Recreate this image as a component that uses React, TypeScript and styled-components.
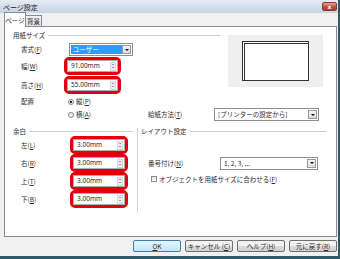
import React from 'react';
import styled, { createGlobalStyle, css } from 'styled-components';

const Global = createGlobalStyle`
  html, body { margin: 0; padding: 0; background: #f0f0f0; }
  body {
    font-family: "Noto Sans CJK JP", "Noto Sans", sans-serif;
    font-size: 6.5px;
    color: #2a2a2a;
  }
  * { box-sizing: border-box; }
`;

const Window = styled.div`
  width: 340px;
  height: 259px;
  display: flex;
  flex-direction: column;
  background: #f0f0f0;
  border-right: 2px solid #2e5a68;
  border-bottom: 3px solid #2e5a68;
  overflow: hidden;
`;

const TitleBar = styled.div`
  height: 13px;
  flex: none;
  display: flex;
  align-items: center;
  justify-content: space-between;
  padding: 0 1px 0 3px;
  background: linear-gradient(#e4ebf3, #c7d4e2);
  font-size: 7px;
  color: #222;
`;

const CloseBtn = styled.div`
  width: 15px;
  height: 9px;
  border-radius: 2px;
  border: 1px solid #8a3b33;
  background: linear-gradient(#e6a497, #c54b3a 55%, #b8392a);
  color: #fff;
  font-family: "DejaVu Sans", sans-serif;
  font-size: 6px;
  font-weight: bold;
  display: flex;
  align-items: center;
  justify-content: center;
  line-height: 1;
`;

const Body = styled.div`
  flex: 1;
  display: flex;
  flex-direction: column;
  padding: 0 1px 0 4px;
`;

const TabRow = styled.div`
  height: 14px;
  display: flex;
  align-items: flex-end;
  position: relative;
  z-index: 1;
  margin-bottom: -1px;
`;

const Tab = styled.div<{ $active?: boolean }>`
  display: flex;
  align-items: center;
  justify-content: center;
  border: 1px solid #898c95;
  border-bottom: none;
  line-height: 1;
  white-space: nowrap;
  ${(p) =>
    p.$active
      ? css`
          height: 15px;
          width: 22px;
          background: #fff;
        `
      : css`
          height: 12px;
          width: 17px;
          margin-left: -1px;
          background: linear-gradient(#f2f2f2, #dedede);
          border-bottom: 1px solid #898c95;
        `}
`;

const Panel = styled.div`
  height: 211px;
  border: 1px solid #898c95;
  background: #fff;
  padding: 3px 8px 0 8px;
  display: flex;
  flex-direction: column;
`;

const TopSection = styled.div`
  display: flex;
  height: 64px;
`;

const Column = styled.div<{ $w: number }>`
  width: ${(p) => p.$w}px;
  display: flex;
  flex-direction: column;
`;

const GroupHeader = styled.div`
  height: 10px;
  display: flex;
  align-items: center;
  gap: 3px;
  line-height: 1;
  &::after {
    content: '';
    flex: 1;
    height: 1px;
    background: #c9c9c9;
  }
`;

const Row = styled.div<{ $h: number; $mt?: number }>`
  height: ${(p) => p.$h}px;
  margin-top: ${(p) => p.$mt ?? 0}px;
  display: flex;
  align-items: center;
  line-height: 1;
`;

const Label = styled.div<{ $w: number; $indent?: number }>`
  width: ${(p) => p.$w}px;
  margin-left: ${(p) => p.$indent ?? 8}px;
  flex: none;
  white-space: nowrap;
`;

const U = styled.span`
  text-decoration: underline;
`;

const Highlight = styled.div<{ $w: number }>`
  width: ${(p) => p.$w}px;
  height: 18px;
  border: 3px solid #e4000a;
  border-radius: 5px;
  display: flex;
`;

const SpinField = styled.div`
  flex: 1;
  border: 1px solid #abadb3;
  background: #fff;
  display: flex;
  align-items: center;
  padding: 0 1px 0 3px;
  font-family: "Noto Sans", sans-serif;
  font-size: 6.5px;
`;

const SpinText = styled.span`
  flex: 1;
`;

const Spinner = styled.div`
  width: 6px;
  height: 9px;
  display: flex;
  flex-direction: column;
  border: 1px solid #d6d9de;
  background: #eceef1;
  align-items: center;
  justify-content: space-around;
`;

const Tri = styled.div<{ $down?: boolean }>`
  width: 0;
  height: 0;
  border-left: 1.5px solid transparent;
  border-right: 1.5px solid transparent;
  ${(p) =>
    p.$down
      ? css`border-top: 1.5px solid #3c4b66;`
      : css`border-bottom: 1.5px solid #3c4b66;`}
`;

const Combo = styled.div<{ $w: number }>`
  width: ${(p) => p.$w}px;
  height: 13px;
  border: 1px solid #8e8f8f;
  background: #fff;
  display: flex;
  padding: 1px;
`;

const ComboText = styled.div<{ $selected?: boolean }>`
  flex: 1;
  display: flex;
  align-items: center;
  padding-left: 2px;
  white-space: nowrap;
  overflow: hidden;
  ${(p) =>
    p.$selected &&
    css`
      background: #3399ff;
      color: #fff;
    `}
`;

const DropBtn = styled.div`
  width: 9px;
  border: 1px solid #9a9a9a;
  background: linear-gradient(#f4f4f4, #dcdcdc);
  display: flex;
  align-items: center;
  justify-content: center;
  &::after {
    content: '';
    border-left: 2px solid transparent;
    border-right: 2px solid transparent;
    border-top: 2px solid #111;
  }
`;

const Radio = styled.div<{ $on?: boolean }>`
  width: 6px;
  height: 6px;
  border-radius: 50%;
  border: 1px solid #8a8a8a;
  background: ${(p) =>
    p.$on ? 'radial-gradient(circle, #1d2f55 0 1.3px, #eaeaea 1.6px)' : 'linear-gradient(#e4e4e4, #fafafa)'};
  margin-right: 2px;
  flex: none;
`;

const Option = styled.div<{ $w: number }>`
  width: ${(p) => p.$w}px;
  display: flex;
  align-items: center;
`;

const Preview = styled.div`
  width: 95px;
  height: 52px;
  margin-top: 5px;
  margin-left: 8px;
  background: #efefef;
  display: flex;
  align-items: center;
  justify-content: center;
`;

const Paper = styled.div`
  width: 67px;
  height: 40px;
  border: 1px solid #333;
  padding: 1px;
  background: #fff;
  &::after {
    content: '';
    display: block;
    width: 100%;
    height: 100%;
    border: 1px solid #333;
  }
`;

const BottomSection = styled.div`
  display: flex;
  margin-top: 5px;
`;

const VSep = styled.div`
  width: 1px;
  height: 85px;
  margin: 2px 3px 0 4px;
  background: #d2d2d2;
`;

const Check = styled.div`
  width: 6px;
  height: 6px;
  border: 1px solid #8a8a8a;
  background: linear-gradient(#e4e4e4, #fafafa);
  margin: 0 2px 0 10px;
  flex: none;
`;

const ButtonRow = styled.div`
  display: flex;
  justify-content: flex-end;
  gap: 4px;
  margin-top: 3px;
`;

const Button = styled.div<{ $default?: boolean }>`
  width: 48px;
  height: 12px;
  border-radius: 2px;
  border: 1px solid ${(p) => (p.$default ? '#3c7fb1' : '#707070')};
  background: ${(p) =>
    p.$default ? 'linear-gradient(#eaf6fd, #bee6fd)' : 'linear-gradient(#f2f2f2 50%, #dddddd 51%, #cfcfcf)'};
  display: flex;
  align-items: center;
  justify-content: center;
  line-height: 1;
  white-space: nowrap;
`;

function SpinInput({ w, value }: { w: number; value: string }) {
  return (
    <Highlight $w={w}>
      <SpinField>
        <SpinText>{value}</SpinText>
        <Spinner>
          <Tri />
          <Tri $down />
        </Spinner>
      </SpinField>
    </Highlight>
  );
}

function ComboBox({ w, text, selected }: { w: number; text: string; selected?: boolean }) {
  return (
    <Combo $w={w}>
      <ComboText $selected={selected}>{text}</ComboText>
      <DropBtn />
    </Combo>
  );
}

export default function App() {
  const margins: [string, string, string][] = [
    ['左', 'L', '3.00mm'],
    ['右', 'R', '3.00mm'],
    ['上', 'T', '3.00mm'],
    ['下', 'B', '3.00mm'],
  ];
  return (
    <>
      <Global />
      <Window>
        <TitleBar>
          <span>ページ設定</span>
          <CloseBtn>x</CloseBtn>
        </TitleBar>
        <Body>
          <TabRow>
            <Tab $active>ページ</Tab>
            <Tab>背景</Tab>
          </TabRow>
          <Panel>
            <TopSection>
              <Column $w={207}>
                <GroupHeader>用紙サイズ</GroupHeader>
                <Row $h={13} $mt={3}>
                  <Label $w={48}>
                    書式(<U>F</U>)
                  </Label>
                  <ComboBox w={64} text="ユーザー" selected />
                </Row>
                <Row $h={18} $mt={1}>
                  <Label $w={43}>
                    幅(<U>W</U>)
                  </Label>
                  <SpinInput w={57} value="91.00mm" />
                </Row>
                <Row $h={18} $mt={1}>
                  <Label $w={43}>
                    高さ(<U>H</U>)
                  </Label>
                  <SpinInput w={57} value="55.00mm" />
                </Row>
              </Column>
              <Preview>
                <Paper />
              </Preview>
            </TopSection>
            <Row $h={13} $mt={1}>
              <Label $w={47}>配置</Label>
              <Option $w={80}>
                <Radio $on />
                縦(<U>P</U>)
              </Option>
            </Row>
            <Row $h={13}>
              <Label $w={47} />
              <Option $w={80}>
                <Radio />
                横(<U>A</U>)
              </Option>
              <Label $w={66} $indent={0}>
                給紙方法(<U>T</U>)
              </Label>
              <ComboBox w={105} text="[プリンターの設定から]" />
            </Row>
            <BottomSection>
              <Column $w={120}>
                <GroupHeader>余白</GroupHeader>
                {margins.map(([k, m, v]) => (
                  <Row $h={18} key={k}>
                    <Label $w={49}>
                      {k}(<U>{m}</U>)
                    </Label>
                    <SpinInput w={58} value={v} />
                  </Row>
                ))}
              </Column>
              <VSep />
              <Column $w={185}>
                <GroupHeader>レイアウト設定</GroupHeader>
                <Row $h={18} />
                <Row $h={18}>
                  <Label $w={72} $indent={7}>
                    番号付け(<U>N</U>)
                  </Label>
                  <ComboBox w={98} text="1, 2, 3, ..." />
                </Row>
                <Row $h={14}>
                  <Check />
                  オブジェクトを用紙サイズに合わせる(<U>F</U>)
                </Row>
              </Column>
            </BottomSection>
          </Panel>
          <ButtonRow>
            <Button $default>
              <U>O</U>K
            </Button>
            <Button>
              キャンセル (<U>C</U>)
            </Button>
            <Button>
              ヘルプ(<U>H</U>)
            </Button>
            <Button>
              元に戻す(<U>R</U>)
            </Button>
          </ButtonRow>
        </Body>
      </Window>
    </>
  );
}
